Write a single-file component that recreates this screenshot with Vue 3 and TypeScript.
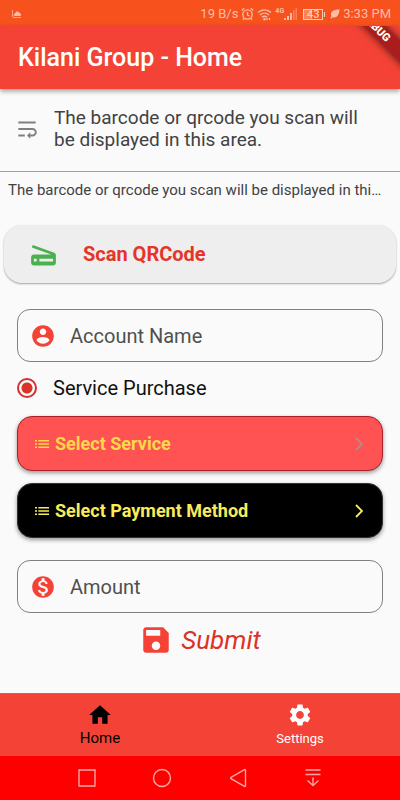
<script setup lang="ts">
import { ref } from 'vue'

const message = 'The barcode or qrcode you scan will be displayed in this area.'
const account = ref('')
const amount = ref('')
const kind = ref('service')
const tab = ref('home')
</script>

<template>
  <div class="screen">
    <div class="status">
      <svg class="cloud" width="10" height="10" viewBox="0 0 10 10" aria-hidden="true">
        <path d="M.5 1v7M2 6.500c0-1.500 1-2 1.500-2 .3-1.200 1-1.700 1.800-1.700s1.400.6 1.600 1.300c1 0 1.800.6 1.800 2.400z" />
        <path d="M1 8.500h8" />
      </svg>
      <div class="status-right">
        <span>19 B/s</span>
        <svg width="13" height="14" viewBox="0 0 13 14" class="line" aria-hidden="true">
          <circle cx="6.500" cy="7.500" r="4.700" />
          <path d="M6.500 5v3l2 1M.7 3.500L3.200 1.300M12.300 3.500L9.800 1.300M3 11.500l-1 1.300M10 11.500l1 1.300" />
        </svg>
        <svg width="15" height="13" viewBox="0 0 15 13" class="line" aria-hidden="true">
          <path d="M1 4.500c3.700-3.600 9.300-3.600 13 0M3 7c2.700-2.600 6.300-2.600 9 0M5 9.300c1.500-1.300 3.500-1.300 5 0" />
          <circle cx="7.500" cy="11.300" r=".6" />
          <path d="M10 12v-2M12.500 10v2" />
        </svg>
        <span class="signal">
          <span class="gen">4G</span>
          <svg width="13" height="12" viewBox="0 0 13 12" aria-hidden="true">
            <path d="M0 10h2v2H0zM3 8h2v4H3zM6 5h2v7H6z" />
            <path class="faint" d="M9 2h1.500v10H9zM11.500 0H13v12h-1.500z" />
          </svg>
        </span>
        <span class="battery">43</span>
        <svg width="10" height="10" viewBox="0 0 10 10" aria-hidden="true">
          <path d="M9.500.5C4 .5 1 2 1 5.500c0 .8.200 1.300.5 1.800L.3 9l.9.700 1.200-1.500C6.500 9.500 9 6.500 9.500.5z" />
        </svg>
        <span>3:33 PM</span>
      </div>
    </div>

    <header class="appbar">
      <h1>Kilani Group - Home</h1>
      <div class="ribbon-clip"><span class="ribbon">DEBUG</span></div>
    </header>

    <main>
      <section class="result">
        <svg width="26" height="26" viewBox="0 0 24 24" aria-hidden="true">
          <path d="M4 19h6v-2H4v2zM20 5H4v2h16V5zm-3 6H4v2h13.250c1.100 0 2 .9 2 2s-.9 2-2 2H15v-2l-3 3 3 3v-2h2c2.210 0 4-1.790 4-4s-1.790-4-4-4z" />
        </svg>
        <p>{{ message }}</p>
      </section>
      <p class="summary">{{ message }}</p>

      <button type="button" class="scan">
        <svg width="33" height="33" viewBox="0 0 24 24" aria-hidden="true">
          <path d="M19.800 10.700L4.200 5l-.7 1.900L17.600 12H5c-1.100 0-2 .9-2 2v4c0 1.100.9 2 2 2h14c1.100 0 2-.9 2-2v-5.500c0-.8-.5-1.600-1.200-1.800zM7 17H5v-2h2v2zm12 0H9v-2h10v2z" />
        </svg>
        <span>Scan QRCode</span>
      </button>

      <form class="form" @submit.prevent>
        <label class="field">
          <svg width="26" height="26" viewBox="0 0 24 24" aria-hidden="true">
            <path d="M12 2C6.480 2 2 6.480 2 12s4.480 10 10 10 10-4.480 10-10S17.520 2 12 2zm0 3c1.660 0 3 1.340 3 3s-1.340 3-3 3-3-1.340-3-3 1.340-3 3-3zm0 14.200c-2.500 0-4.710-1.280-6-3.220.03-1.990 4-3.080 6-3.080 1.990 0 5.970 1.090 6 3.080-1.290 1.940-3.500 3.220-6 3.220z" />
          </svg>
          <input v-model="account" type="text" placeholder="Account Name" aria-label="Account Name" />
        </label>

        <label class="choice">
          <input v-model="kind" type="radio" name="kind" value="service" />
          <span>Service Purchase</span>
        </label>

        <button type="button" class="picker red">
          <svg width="14" height="10" viewBox="0 0 14 10" aria-hidden="true">
            <path d="M0 1h2v1.500H0zM0 4.300h2v1.500H0zM0 7.600h2v1.500H0zM3.300 1H14v1.500H3.300zM3.300 4.300H14v1.500H3.300zM3.300 7.600H14v1.500H3.300z" />
          </svg>
          <span>Select Service</span>
          <svg class="chevron" width="8" height="14" viewBox="0 0 8 14" aria-hidden="true"><path d="M1 1l6 6-6 6" /></svg>
        </button>
        <button type="button" class="picker black">
          <svg width="14" height="10" viewBox="0 0 14 10" aria-hidden="true">
            <path d="M0 1h2v1.500H0zM0 4.300h2v1.500H0zM0 7.600h2v1.500H0zM3.300 1H14v1.500H3.300zM3.300 4.300H14v1.500H3.300zM3.300 7.600H14v1.500H3.300z" />
          </svg>
          <span>Select Payment Method</span>
          <svg class="chevron" width="8" height="14" viewBox="0 0 8 14" aria-hidden="true"><path d="M1 1l6 6-6 6" /></svg>
        </button>

        <label class="field amount">
          <svg width="26" height="26" viewBox="0 0 24 24" aria-hidden="true">
            <path d="M12 2C6.480 2 2 6.480 2 12s4.480 10 10 10 10-4.480 10-10S17.520 2 12 2zm1.410 16.090V20h-2.670v-1.930c-1.710-.36-3.160-1.460-3.270-3.400h1.960c.1 1.050.82 1.870 2.650 1.870 1.960 0 2.400-.98 2.400-1.590 0-.83-.44-1.610-2.670-2.140-2.480-.6-4.180-1.620-4.180-3.670 0-1.720 1.390-2.840 3.110-3.210V4h2.670v1.950c1.860.45 2.790 1.860 2.850 3.390H14.300c-.05-1.110-.64-1.870-2.220-1.870-1.500 0-2.400.68-2.400 1.640 0 .84.65 1.390 2.670 1.910s4.180 1.390 4.180 3.910c-.01 1.830-1.380 2.830-3.120 3.160z" />
          </svg>
          <input v-model="amount" type="text" inputmode="decimal" placeholder="Amount" aria-label="Amount" />
        </label>

        <button type="submit" class="submit">
          <svg width="34" height="34" viewBox="0 0 24 24" aria-hidden="true">
            <path d="M17 3H5c-1.110 0-2 .9-2 2v14c0 1.100.89 2 2 2h14c1.100 0 2-.9 2-2V7l-4-4zm-5 16c-1.660 0-3-1.340-3-3s1.340-3 3-3 3 1.340 3 3-1.340 3-3 3zm3-10H5V5h10v4z" />
          </svg>
          <span>Submit</span>
        </button>
      </form>
    </main>

    <nav class="tabs">
      <button type="button" :class="{ active: tab === 'home' }" @click="tab = 'home'">
        <svg width="26" height="26" viewBox="0 0 24 24" aria-hidden="true">
          <path d="M10 20v-6h4v6h5v-8h3L12 3 2 12h3v8z" />
        </svg>
        <span>Home</span>
      </button>
      <button type="button" :class="{ active: tab === 'settings' }" @click="tab = 'settings'">
        <svg width="26" height="26" viewBox="0 0 24 24" aria-hidden="true">
          <path d="M19.140 12.940c.04-.3.06-.61.06-.94 0-.32-.02-.64-.07-.94l2.030-1.580c.18-.14.23-.41.12-.61l-1.920-3.320c-.12-.22-.37-.29-.59-.22l-2.390.96c-.5-.38-1.030-.7-1.620-.94l-.36-2.540c-.04-.24-.24-.41-.48-.41h-3.840c-.24 0-.43.17-.47.41l-.36 2.540c-.59.24-1.130.57-1.620.94l-2.390-.96c-.22-.08-.47 0-.59.22L2.740 8.870c-.12.21-.08.47.12.61l2.030 1.580c-.05.3-.09.63-.09.94s.02.64.07.94l-2.030 1.580c-.18.14-.23.41-.12.61l1.920 3.320c.12.22.37.29.59.22l2.390-.96c.5.38 1.030.7 1.620.94l.36 2.540c.05.24.24.41.48.41h3.840c.24 0 .44-.17.47-.41l.36-2.540c.59-.24 1.130-.56 1.620-.94l2.390.96c.22.08.47 0 .59-.22l1.920-3.320c.12-.22.07-.47-.12-.61l-2.010-1.580zM12 15.600c-1.980 0-3.600-1.620-3.600-3.600s1.620-3.600 3.600-3.600 3.600 1.620 3.600 3.600-1.620 3.600-3.600 3.600z" />
        </svg>
        <span>Settings</span>
      </button>
    </nav>

    <div class="system">
      <button type="button" aria-label="Recent apps">
        <svg width="20" height="20" viewBox="0 0 20 20"><path d="M2 2h16v16H2z" /></svg>
      </button>
      <button type="button" aria-label="Home screen">
        <svg width="20" height="20" viewBox="0 0 20 20"><circle cx="10" cy="10" r="8.500" /></svg>
      </button>
      <button type="button" aria-label="Back">
        <svg width="20" height="20" viewBox="0 0 20 20"><path d="M17.500 2.200v15.600q0 1-1 .5L3 10.600q-.8-.6 0-1.200L16.500 1.700q1-.5 1 .5z" /></svg>
      </button>
      <button type="button" aria-label="Pull down notifications">
        <svg width="20" height="20" viewBox="0 0 20 20"><path d="M2.500 2h15M2.500 6.500h15M10 9.500v8M4.500 12.500l5.500 5 5.500-5" /></svg>
      </button>
    </div>
  </div>
</template>

<style>
body {
  margin: 0;
}
</style>

<style scoped>
.screen {
  display: flex;
  flex-direction: column;
  min-height: 100vh;
  background: #fafafa;
  color: #424242;
  font-family: Roboto, "Liberation Sans", sans-serif;
}
.screen *,
.screen {
  box-sizing: border-box;
}
svg {
  display: block;
  flex: none;
  fill: currentColor;
}
button {
  margin: 0;
  padding: 0;
  border: 0;
  background: none;
  color: inherit;
  font-family: inherit;
  cursor: pointer;
}
h1,
p {
  margin: 0;
}
.status {
  display: flex;
  align-items: center;
  justify-content: space-between;
  height: 26px;
  padding: 2px 9px 0 12px;
  background: #f7521e;
  color: #fcbca5;
  font-size: 13px;
  line-height: 16px;
}
.cloud {
  stroke: currentColor;
  stroke-width: 0.8;
}
.status-right {
  display: flex;
  align-items: center;
  gap: 3px;
}
.line {
  fill: none;
  stroke: currentColor;
  stroke-width: 1.3;
}
.signal {
  display: flex;
  align-items: flex-end;
}
.gen {
  align-self: flex-start;
  font-size: 7px;
  line-height: 7px;
  font-weight: 700;
}
.faint {
  opacity: 0.45;
}
.battery {
  position: relative;
  width: 20px;
  height: 11px;
  margin: 0 4px 0 3px;
  border: 1px solid currentColor;
  background: linear-gradient(90deg, #f9845a 45%, transparent 45%);
  color: #fdcdbb;
  font-size: 11px;
  line-height: 9px;
  font-weight: 500;
  text-align: center;
}
.battery::after {
  content: "";
  position: absolute;
  top: 2px;
  right: -3px;
  width: 1px;
  height: 5px;
  background: currentColor;
}
.appbar {
  position: relative;
  display: flex;
  align-items: center;
  height: 63px;
  padding: 0 18px;
  background: #f44336;
  box-shadow: 0 2px 5px rgba(0, 0, 0, 0.4);
  color: #fff;
}
h1 {
  font-size: 25px;
  line-height: 28px;
  font-weight: 500;
}
.ribbon-clip {
  position: absolute;
  top: 0;
  right: 0;
  width: 60px;
  height: 60px;
  overflow: hidden;
}
.ribbon {
  position: absolute;
  top: -6px;
  right: -26px;
  width: 100px;
  height: 15px;
  transform: rotate(45deg);
  background: #ab1d1c;
  box-shadow: 0 0 8px rgba(0, 0, 0, 0.7);
  font-size: 11px;
  line-height: 15px;
  font-weight: 900;
  text-align: center;
}
main {
  flex: 1;
}
.result {
  display: flex;
  align-items: center;
  gap: 14px;
  min-height: 83px;
  padding: 0 24px 2px 14px;
  border-bottom: 1px solid #a0a0a0;
}
.result svg {
  color: #808080;
}
.result p {
  font-size: 19px;
  line-height: 22px;
}
.summary {
  margin: 8px 12px 0 8px;
  overflow: hidden;
  font-size: 15px;
  line-height: 20px;
  white-space: nowrap;
  text-overflow: ellipsis;
}
.scan {
  display: flex;
  align-items: center;
  gap: 23px;
  width: calc(100% - 8px);
  height: 58px;
  margin: 25px 4px 0;
  padding: 0 23px;
  border-radius: 18px;
  background: #eee;
  box-shadow: 0 1px 2px rgba(0, 0, 0, 0.35);
  color: #e53529;
  font-size: 20px;
  line-height: 24px;
  font-weight: 700;
}
.scan svg {
  color: #4caf50;
}
.form {
  display: flex;
  flex-direction: column;
  padding: 26px 17px 0;
}
.field {
  display: flex;
  align-items: center;
  gap: 14px;
  height: 53px;
  padding: 0 12px;
  border: 1px solid #808080;
  border-radius: 13px;
}
.field svg {
  color: #f44336;
}
.field input {
  flex: 1;
  min-width: 0;
  padding: 0;
  border: 0;
  outline: 0;
  background: none;
  color: #424242;
  font-family: inherit;
  font-size: 20px;
  line-height: 24px;
}
.field input::placeholder {
  color: #505050;
  opacity: 1;
}
.choice {
  display: flex;
  align-items: center;
  gap: 16px;
  height: 54px;
  padding-bottom: 2px;
  color: #111;
  font-size: 20px;
  line-height: 24px;
}
.choice input {
  appearance: none;
  width: 20px;
  height: 20px;
  margin: 0;
  border: 2px solid #d32f2f;
  border-radius: 50%;
}
.choice input:checked {
  background: radial-gradient(circle, #d8322c 5px, transparent 6px);
}
.picker {
  display: flex;
  align-items: center;
  gap: 6px;
  height: 55px;
  padding: 0 19px 0 17px;
  border-radius: 15px;
  box-shadow: 0 2px 4px rgba(0, 0, 0, 0.4);
  font-size: 18px;
  line-height: 20px;
  font-weight: 700;
}
.picker + .picker {
  margin-top: 12px;
}
.red {
  border: 1px solid #a8202a;
  background: #ff5252;
  color: #fbd84b;
}
.black {
  border: 1px solid #333;
  background: #000;
  color: #f9ec5c;
}
.chevron {
  margin-left: auto;
  fill: none;
  stroke: currentColor;
  stroke-width: 1.8;
}
.red .chevron {
  color: #b98a8a;
}
.amount {
  margin-top: 22px;
}
.submit {
  display: flex;
  align-items: center;
  align-self: center;
  gap: 8px;
  height: 54px;
  color: #dc3226;
  font-size: 26px;
  line-height: 32px;
  font-style: italic;
}
.submit svg {
  color: #f44336;
}
.tabs {
  display: flex;
  height: 63px;
  border-top: 1px solid #cc6058;
  background: #f44336;
}
.tabs button {
  display: flex;
  flex: 1;
  flex-direction: column;
  align-items: center;
  padding-top: 8px;
  color: #fff;
  font-size: 13px;
  line-height: 22px;
}
.tabs .active {
  color: #000;
  font-size: 15px;
  line-height: 20px;
}
.system {
  display: flex;
  align-items: center;
  justify-content: center;
  height: 44px;
  padding: 0 49px;
  background: #f00;
  color: #ffa6a6;
}
.system button {
  display: flex;
  flex: 1;
  justify-content: center;
}
.system svg {
  fill: none;
  stroke: currentColor;
  stroke-width: 1.4;
}
</style>
